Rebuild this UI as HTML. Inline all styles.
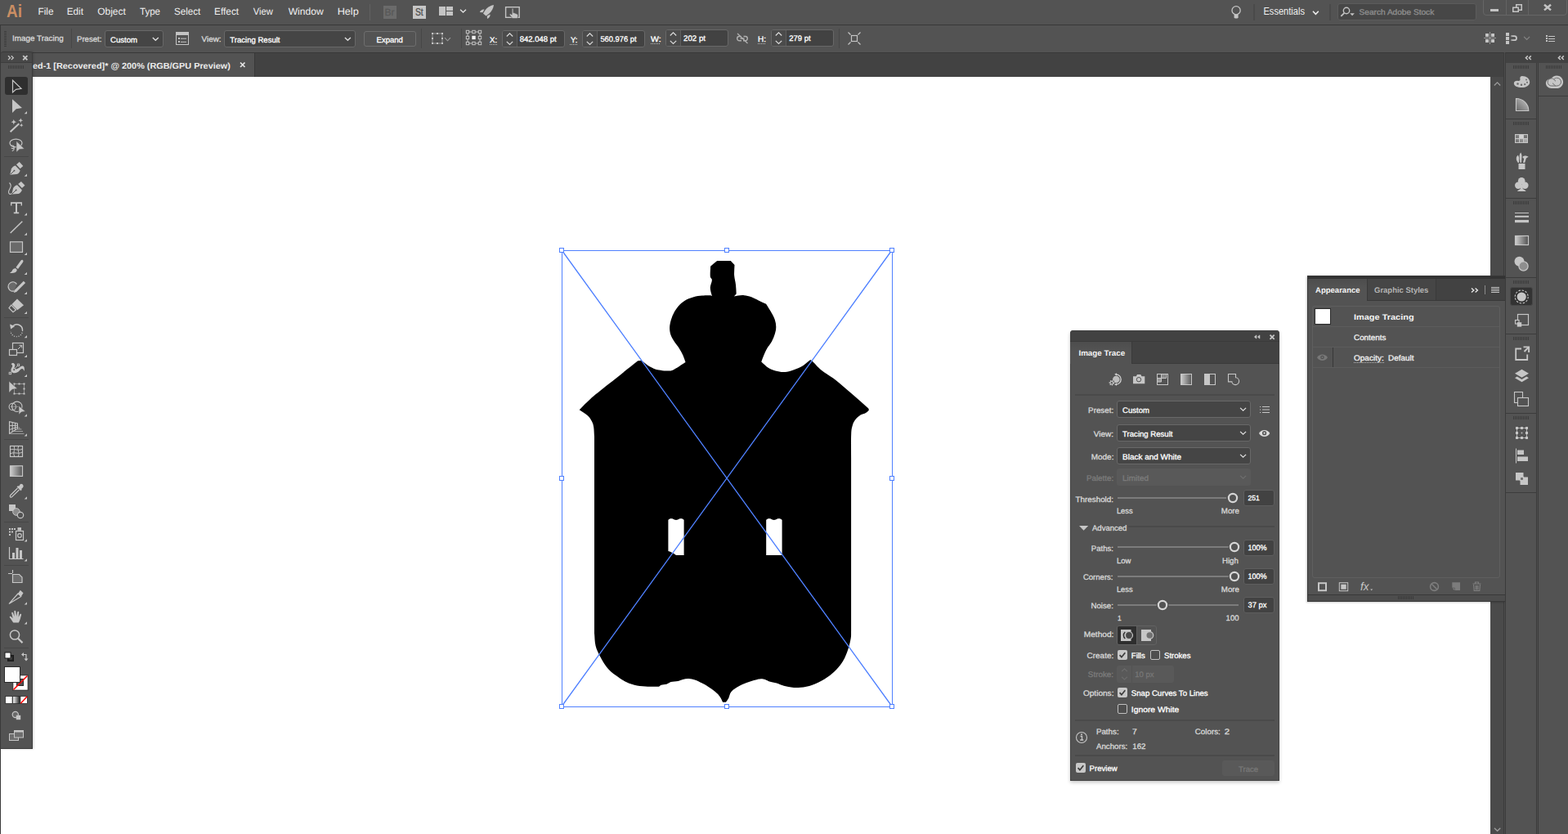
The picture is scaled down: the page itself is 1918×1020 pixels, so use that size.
<!DOCTYPE html>
<html lang="en">
<head>
<meta charset="utf-8">
<title>Adobe Illustrator - Image Trace</title>
<style>
*{box-sizing:border-box;margin:0;padding:0}
html,body{width:1918px;height:1020px;overflow:hidden;background:#fff}
body{font-family:"Liberation Sans",sans-serif;font-size:10px;color:#d6d6d6;position:relative}
.a{position:absolute}
.t{position:absolute;white-space:nowrap}
svg{position:absolute;overflow:visible}
.fld{position:absolute;background:#454545;border:1px solid #686868;border-radius:3px}
.sep{position:absolute;width:1px;background:#474747}
.u{position:absolute;height:1px;background-image:linear-gradient(90deg,#bbb 50%,transparent 50%);background-size:2px 1px}
</style>
</head>
<body>

<!-- frame -->

<div class="a" style="left:0;top:0;width:1918px;height:30px;background:#535353"></div>
<div class="a" style="left:0;top:30px;width:1918px;height:1px;background:#383838"></div>
<div class="a" style="left:0;top:31px;width:1918px;height:33px;background:#535353;border-left:1px solid #3a3a3a"></div>
<div class="a" style="left:0;top:64px;width:1918px;height:30px;background:#424242;border-top:1px solid #383838"></div>
<div class="a" style="left:40px;top:65px;width:272px;height:29px;background:#535353;border-right:1px solid #383838"></div>
<div class="a" style="left:40px;top:94px;width:1783px;height:926px;background:#fff"></div>

<!-- menubar -->
<div class="t" style="left:8px;top:-2px;color:#ca8e63;font-size:22.4px;line-height:31px;height:31px;font-weight:700;transform:translate(0.05px,0.1px) scaleX(0.85) skewX(.03deg);transform-origin:0 0;">Ai</div>
<div class="t" style="left:46px;top:6px;color:#f0f0f0;font-size:12px;line-height:17px;height:17px;transform:translate(0.41px,0px) scaleX(0.989) skewX(.03deg);transform-origin:0 0;">File</div>
<div class="t" style="left:81px;top:6px;color:#f0f0f0;font-size:12px;line-height:17px;height:17px;transform:translate(0.73px,0px) scaleX(0.975) skewX(.03deg);transform-origin:0 0;">Edit</div>
<div class="t" style="left:119px;top:6px;color:#f0f0f0;font-size:12px;line-height:17px;height:17px;transform:translate(0.2px,0px) scaleX(0.997) skewX(.03deg);transform-origin:0 0;">Object</div>
<div class="t" style="left:171px;top:6px;color:#f0f0f0;font-size:12px;line-height:17px;height:17px;transform:translate(0px,0px) scaleX(0.962) skewX(.03deg);transform-origin:0 0;">Type</div>
<div class="t" style="left:213px;top:6px;color:#f0f0f0;font-size:12px;line-height:17px;height:17px;transform:translate(0.03px,0px) scaleX(0.969) skewX(.03deg);transform-origin:0 0;">Select</div>
<div class="t" style="left:262px;top:6px;color:#f0f0f0;font-size:12px;line-height:17px;height:17px;transform:translate(0.01px,0px) scaleX(0.99) skewX(.03deg);transform-origin:0 0;">Effect</div>
<div class="t" style="left:309px;top:6px;color:#f0f0f0;font-size:12px;line-height:17px;height:17px;transform:translate(0.7px,0px) scaleX(0.935) skewX(.03deg);transform-origin:0 0;">View</div>
<div class="t" style="left:352px;top:6px;color:#f0f0f0;font-size:12px;line-height:17px;height:17px;transform:translate(0.7px,0px) scaleX(1.007) skewX(.03deg);transform-origin:0 0;">Window</div>
<div class="t" style="left:412px;top:6px;color:#f0f0f0;font-size:12px;line-height:17px;height:17px;transform:translate(0.64px,0px) scaleX(1.057) skewX(.03deg);transform-origin:0 0;">Help</div>
<div class="sep" style="left:452px;top:5px;height:20px;background:#616161"></div>
<div class="a" style="left:469px;top:7px;width:16px;height:16px;background:#6b6b6b"></div>
<div class="t" style="left:470px;top:7px;color:#585858;font-size:12px;line-height:17px;height:17px;transform:translate(0.6px,0.2px) scaleX(1) skewX(.03deg);transform-origin:0 0;-webkit-text-stroke:0.25px #585858;">Br</div>
<div class="a" style="left:505px;top:7px;width:16px;height:16px;background:#c6c6c6"></div>
<div class="t" style="left:508px;top:7px;color:#4c4c4c;font-size:12px;line-height:17px;height:17px;transform:translate(0px,0.2px) scaleX(0.858) skewX(.03deg);transform-origin:0 0;-webkit-text-stroke:0.25px #4c4c4c;">St</div>
<svg style="left:0;top:0" width="700" height="30" viewBox="0 0 700 30">
<g fill="#c4c4c4">
<rect x="537" y="8" width="8" height="11"/><rect x="546" y="8" width="8" height="5"/><rect x="546" y="14" width="8" height="5"/>
</g>
<path d="M563 11.7L566.5 15L570 11.7" fill="none" stroke="#e0e0e0" stroke-width="1.3"/>
<g fill="#c4c4c4">
<path d="M604 6C600 6.5 596 9 593.5 12.5L591 16.5L594.5 19.5L598.5 16.5C601.5 13.5 603.5 10 604 6Z"/>
<path d="M592.5 11.5C590 11 588 12.5 586.8 15L590.5 15.2Z"/>
<path d="M599.5 17.5C600 20 598.5 22 596 23L595.8 19.5Z"/>
</g>
<rect x="618.6" y="8.7" width="16.6" height="12.6" fill="none" stroke="#c4c4c4" stroke-width="1.4"/>
<path d="M626.2 10.5c.9-.6 1.700 0 1.700 .9v4.200l1.300 .2 3.500 1.400c.8 .4 1.100 1.300 .9 2.200l-.6 3.200h-6.200l-3.300-4.300c-.5-.8 .2-1.800 1.200-1.300l1.500 .9Z" fill="#c4c4c4" stroke="#535353" stroke-width=".6"/>
</svg>
<div class="a" style="left:1636px;top:4px;width:170px;height:21px;background:#474747;border:1px solid #5c5c5c;border-radius:3px"></div>
<svg style="left:1500px;top:0" width="418" height="30" viewBox="1500 0 418 30">
<circle cx="1512.100" cy="12.700" r="5.100" fill="none" stroke="#c4c4c4" stroke-width="1.300"/>
<path d="M1509.600 18h5v3.200l-1 1.300h-3l-1-1.300Z" fill="#c4c4c4"/>
<path d="M1606 13.800L1609.400 17.400L1612.800 13.800" fill="none" stroke="#ececec" stroke-width="1.600"/>
<circle cx="1647" cy="13" r="3.700" fill="none" stroke="#c4c4c4" stroke-width="1.400"/>
<path d="M1644.400 15.800L1640.300 19.800" stroke="#c4c4c4" stroke-width="1.800" fill="none"/>
<path d="M1651.300 16.300h5.600l-2.800 3Z" fill="#c4c4c4"/>
<rect x="1823" y="11" width="10" height="3" fill="#c4c4c4"/>
<rect x="1854.750" y="5.750" width="6.500" height="6.500" fill="none" stroke="#c4c4c4" stroke-width="1.500"/>
<rect x="1850.750" y="9.250" width="6.500" height="5" fill="#535353" stroke="#c4c4c4" stroke-width="1.500"/>
<path d="M1889 5.800L1897 12.400M1897 5.800L1889 12.400" stroke="#c4c4c4" stroke-width="2.500" fill="none"/>
</svg>
<div class="sep" style="left:1533px;top:5px;height:20px;width:2px;background:#4a4a4a"></div>
<div class="t" style="left:1545px;top:5px;color:#f0f0f0;font-size:12px;line-height:17px;height:17px;transform:translate(0.48px,0.6px) scaleX(0.922) skewX(.03deg);transform-origin:0 0;">Essentials</div>
<div class="sep" style="left:1626px;top:5px;height:20px;width:2px;background:#4a4a4a"></div>
<div class="t" style="left:1662px;top:7px;color:#8f8f8f;font-size:9.5px;line-height:13px;height:13px;transform:translate(0.6px,0.6px) scaleX(1.064) skewX(.03deg);transform-origin:0 0;-webkit-text-stroke:0.3px #8f8f8f;">Search Adobe Stock</div>
<div class="a" style="left:1814px;top:-3px;width:103px;height:22px;border:1px solid #666;border-radius:4px"></div>
<div class="sep" style="left:1842px;top:0;height:18px;background:#636363"></div>
<div class="sep" style="left:1869px;top:0;height:18px;background:#636363"></div>
<!-- ctrlbar -->
<div class="a" style="left:5px;top:38px;width:3px;height:19px;background-image:linear-gradient(180deg,#3c3c3c 50%,transparent 50%);background-size:3px 2px"></div>
<div class="t" style="left:15px;top:40px;color:#d8d8d8;font-size:9.6px;line-height:13px;height:13px;transform:translate(0px,0.1px) scaleX(1.033) skewX(.03deg);transform-origin:0 0;-webkit-text-stroke:0.3px #d8d8d8;">Image Tracing</div>
<div class="sep" style="left:87px;top:35px;height:24px"></div>
<div class="t" style="left:94px;top:40px;color:#d8d8d8;font-size:9.6px;line-height:13px;height:13px;transform:translate(0px,0.6px) scaleX(1) skewX(.03deg);transform-origin:0 0;-webkit-text-stroke:0.3px #d8d8d8;">Preset:</div>
<div class="fld" style="left:128px;top:37px;width:72px;height:21px"></div>
<div class="t" style="left:135px;top:41px;color:#ffffff;font-size:9.6px;line-height:13px;height:13px;transform:translate(0px,0.6px) scaleX(1) skewX(.03deg);transform-origin:0 0;-webkit-text-stroke:0.3px #ffffff;">Custom</div>
<div class="t" style="left:246px;top:40px;color:#d8d8d8;font-size:9.6px;line-height:13px;height:13px;transform:translate(0.5px,0.6px) scaleX(1.035) skewX(.03deg);transform-origin:0 0;-webkit-text-stroke:0.3px #d8d8d8;">View:</div>
<div class="fld" style="left:274px;top:37px;width:161px;height:21px"></div>
<div class="t" style="left:281px;top:41px;color:#ffffff;font-size:9.6px;line-height:13px;height:13px;transform:translate(0.3px,0.6px) scaleX(0.995) skewX(.03deg);transform-origin:0 0;-webkit-text-stroke:0.3px #ffffff;">Tracing Result</div>
<div class="a" style="left:445px;top:38px;width:64px;height:19px;border:1px solid #6e6e6e;border-radius:3px"></div>
<div class="t" style="left:460px;top:41px;color:#ffffff;font-size:9.6px;line-height:13px;height:13px;transform:translate(0.6px,0.6px) scaleX(0.991) skewX(.03deg);transform-origin:0 0;-webkit-text-stroke:0.3px #ffffff;">Expand</div>
<div class="sep" style="left:515px;top:35px;height:24px"></div>
<div class="sep" style="left:564px;top:35px;height:24px"></div>
<div class="fld" style="left:614px;top:37px;width:77px;height:21px;background:#424242"></div><div class="a" style="left:615px;top:38px;width:18px;height:19px;background:#4b4b4b;border-right:1px solid #5e5e5e;border-radius:2px 0 0 2px"></div>
<div class="fld" style="left:712px;top:37px;width:77px;height:21px;background:#424242"></div><div class="a" style="left:713px;top:38px;width:18px;height:19px;background:#4b4b4b;border-right:1px solid #5e5e5e;border-radius:2px 0 0 2px"></div>
<div class="fld" style="left:814px;top:36px;width:77px;height:21px;background:#424242"></div><div class="a" style="left:815px;top:37px;width:18px;height:19px;background:#4b4b4b;border-right:1px solid #5e5e5e;border-radius:2px 0 0 2px"></div>
<div class="fld" style="left:943px;top:36px;width:77px;height:21px;background:#424242"></div><div class="a" style="left:944px;top:37px;width:18px;height:19px;background:#4b4b4b;border-right:1px solid #5e5e5e;border-radius:2px 0 0 2px"></div>
<div class="t" style="left:599px;top:41px;color:#ffffff;font-size:9.6px;line-height:13px;height:13px;transform:translate(0px,0.6px) scaleX(1) skewX(.03deg);transform-origin:0 0;-webkit-text-stroke:0.3px #ffffff;">X:</div>
<div class="u" style="left:599px;top:54px;width:10px"></div>
<div class="t" style="left:698px;top:41px;color:#ffffff;font-size:9.6px;line-height:13px;height:13px;transform:translate(0px,0.6px) scaleX(1) skewX(.03deg);transform-origin:0 0;-webkit-text-stroke:0.3px #ffffff;">Y:</div>
<div class="u" style="left:697px;top:54px;width:9px"></div>
<div class="t" style="left:796px;top:40px;color:#ffffff;font-size:9.6px;line-height:13px;height:13px;transform:translate(0px,0.8px) scaleX(1.091) skewX(.03deg);transform-origin:0 0;-webkit-text-stroke:0.3px #ffffff;">W:</div>
<div class="u" style="left:796px;top:53px;width:12px"></div>
<div class="t" style="left:927px;top:40px;color:#ffffff;font-size:9.6px;line-height:13px;height:13px;transform:translate(0px,0.8px) scaleX(1.044) skewX(.03deg);transform-origin:0 0;-webkit-text-stroke:0.3px #ffffff;">H:</div>
<div class="u" style="left:927px;top:53px;width:10px"></div>
<div class="t" style="left:635px;top:40px;color:#ffffff;font-size:9.6px;line-height:13px;height:13px;transform:translate(0.8px,0.8px) scaleX(0.987) skewX(.03deg);transform-origin:0 0;-webkit-text-stroke:0.3px #ffffff;">842.048 pt</div>
<div class="t" style="left:734px;top:40px;color:#ffffff;font-size:9.6px;line-height:13px;height:13px;transform:translate(0.4px,0.8px) scaleX(0.974) skewX(.03deg);transform-origin:0 0;-webkit-text-stroke:0.3px #ffffff;">560.976 pt</div>
<div class="t" style="left:836px;top:39px;color:#ffffff;font-size:9.6px;line-height:13px;height:13px;transform:translate(0.1px,0.9px) scaleX(1.007) skewX(.03deg);transform-origin:0 0;-webkit-text-stroke:0.3px #ffffff;">202 pt</div>
<div class="t" style="left:965px;top:39px;color:#ffffff;font-size:9.6px;line-height:13px;height:13px;transform:translate(0.3px,0.9px) scaleX(0.989) skewX(.03deg);transform-origin:0 0;-webkit-text-stroke:0.3px #ffffff;">279 pt</div>
<div class="sep" style="left:1026px;top:35px;height:24px"></div>
<svg style="left:0;top:0" width="1918" height="64" viewBox="0 0 1918 64"><path d="M186.8 45.95L190.3 49.25L193.8 45.95" fill="none" stroke="#e0e0e0" stroke-width="1.3"/><path d="M421.9 45.95L425.4 49.25L428.9 45.95" fill="none" stroke="#e0e0e0" stroke-width="1.3"/><path d="M619.8 44.5L623.5 40.900000000000006L627.2 44.5" fill="none" stroke="#dcdcdc" stroke-width="1.2"/><path d="M619.8 50.900000000000006L623.5 54.5L627.2 50.900000000000006" fill="none" stroke="#dcdcdc" stroke-width="1.2"/><path d="M717.8 44.5L721.5 40.900000000000006L725.2 44.5" fill="none" stroke="#dcdcdc" stroke-width="1.2"/><path d="M717.8 50.900000000000006L721.5 54.5L725.2 50.900000000000006" fill="none" stroke="#dcdcdc" stroke-width="1.2"/><path d="M819.8 43.5L823.5 39.900000000000006L827.2 43.5" fill="none" stroke="#dcdcdc" stroke-width="1.2"/><path d="M819.8 49.900000000000006L823.5 53.5L827.2 49.900000000000006" fill="none" stroke="#dcdcdc" stroke-width="1.2"/><path d="M948.8 43.5L952.5 39.900000000000006L956.2 43.5" fill="none" stroke="#dcdcdc" stroke-width="1.2"/><path d="M948.8 49.900000000000006L952.5 53.5L956.2 49.900000000000006" fill="none" stroke="#dcdcdc" stroke-width="1.2"/><rect x="215.500" y="39.500" width="15" height="15" fill="none" stroke="#c4c4c4" stroke-width="1"/><rect x="215" y="39" width="16" height="4" fill="#c4c4c4"/><rect x="218" y="46" width="2" height="2" fill="#c4c4c4"/><rect x="221" y="46.700" width="7" height="1" fill="#c4c4c4"/><rect x="218" y="50" width="2" height="2" fill="#c4c4c4"/><rect x="221" y="50.800" width="7" height="1" fill="#c4c4c4"/><rect x="529" y="41" width="12" height="12" fill="none" stroke="#a8a8a8" stroke-width=".8"/><rect x="528" y="40" width="2" height="2" fill="#c4c4c4"/><rect x="534" y="40" width="2" height="2" fill="#c4c4c4"/><rect x="540" y="40" width="2" height="2" fill="#c4c4c4"/><rect x="528" y="46" width="2" height="2" fill="#c4c4c4"/><rect x="540" y="46" width="2" height="2" fill="#c4c4c4"/><rect x="528" y="52" width="2" height="2" fill="#c4c4c4"/><rect x="534" y="52" width="2" height="2" fill="#c4c4c4"/><rect x="540" y="52" width="2" height="2" fill="#c4c4c4"/><path d="M544.0 46.2L547.5 49.8L551.0 46.2" fill="none" stroke="#9a9a9a" stroke-width="1.1"/><rect x="570.3" y="37.3" width="3.400" height="3.400" fill="none" stroke="#c4c4c4" stroke-width="1"/><rect x="577.8" y="37.3" width="3.400" height="3.400" fill="none" stroke="#c4c4c4" stroke-width="1"/><rect x="585.3" y="37.3" width="3.400" height="3.400" fill="none" stroke="#c4c4c4" stroke-width="1"/><rect x="570.3" y="44.3" width="3.400" height="3.400" fill="none" stroke="#c4c4c4" stroke-width="1"/><rect x="577.3" y="43.8" width="4.400" height="4.400" fill="#f2f2f2"/><rect x="585.3" y="44.3" width="3.400" height="3.400" fill="none" stroke="#c4c4c4" stroke-width="1"/><rect x="570.3" y="51.3" width="3.400" height="3.400" fill="none" stroke="#c4c4c4" stroke-width="1"/><rect x="577.8" y="51.3" width="3.400" height="3.400" fill="none" stroke="#c4c4c4" stroke-width="1"/><rect x="585.3" y="51.3" width="3.400" height="3.400" fill="none" stroke="#c4c4c4" stroke-width="1"/><path d="M574 39h3.500M581.500 39h3.500M574 53h3.500M581.500 53h3.500M572 41v3M572 48v3M587 41v3M587 48v3" stroke="#c4c4c4" stroke-width="1" fill="none"/><g fill="none" stroke="#b0b0b0" stroke-width="1.500"><path d="M906.500 44.500h-2.200a2.600 2.600 0 0 0 0 5.200h2.700"/><path d="M909.500 44.500h2.200a2.600 2.600 0 0 1 0 5.200h-2.700"/><path d="M905.500 47.100h5"/><path d="M902 41L914.500 53" stroke-width="1.300"/></g><rect x="1041.500" y="43.500" width="7" height="7" fill="none" stroke="#c4c4c4" stroke-width="1.200"/><path d="M1037.500 39.500l3 3M1052.500 39.500l-3 3M1037.500 54.500l3-3M1052.500 54.500l-3-3" stroke="#c4c4c4" stroke-width="1.200" fill="none"/><path d="M1038.500 43v-2.500h2.500M1051.500 43v-2.500h-2.500M1038.500 51v2.500h2.500M1051.500 51v2.500h-2.500" stroke="#c4c4c4" stroke-width="1" fill="none" opacity="0"/><path d="M1039 43.500l1.800-1.800 1.800 1.800ZM1051 43.500l-1.800-1.800-1.800 1.800Z" fill="#c4c4c4" opacity="0"/><g fill="#c4c4c4"><rect x="1817" y="41" width="4" height="4"/><rect x="1824" y="41" width="4" height="4"/><rect x="1817" y="48" width="4" height="4"/><rect x="1824" y="48" width="4" height="4"/></g><rect x="1822" y="39" width="1" height="15" fill="#9a9a9a"/><rect x="1815" y="46" width="15" height="1" fill="#9a9a9a"/><g fill="#c4c4c4"><rect x="1842" y="40" width="4" height="4"/><rect x="1842" y="45" width="4" height="4"/><rect x="1842" y="50" width="4" height="4"/></g><path d="M1848.500 44.200h4a2.500 2.500 0 0 1 0 5h-4" fill="none" stroke="#c4c4c4" stroke-width="1.800"/><rect x="1848" y="43.300" width="1.500" height="1.800" fill="#8a8a8a"/><rect x="1848" y="48.300" width="1.500" height="1.800" fill="#8a8a8a"/><path d="M1864.1 44.800000000000004L1867.6 48.4L1871.1 44.800000000000004" fill="none" stroke="#858585" stroke-width="1.2"/><g fill="#c4c4c4"><rect x="1891" y="43" width="2" height="2"/><rect x="1894" y="44" width="8" height="1"/><rect x="1891" y="46" width="2" height="2"/><rect x="1894" y="47" width="8" height="1"/><rect x="1891" y="49" width="2" height="2"/><rect x="1894" y="50" width="8" height="1"/></g></svg>
<!-- tools -->
<div class="t" style="left:40px;top:73px;color:#ececec;font-size:10.3px;line-height:14px;height:14px;font-weight:700;transform:translate(0px,0.6px) scaleX(1.055) skewX(.03deg);transform-origin:0 0;">ed-1 [Recovered]* @ 200% (RGB/GPU Preview)</div>
<svg style="left:290px;top:72px" width="14" height="14" viewBox="290 72 14 14"><path d="M294 76.500L299.500 82M299.500 76.500L294 82" stroke="#e6e6e6" stroke-width="1.700" fill="none"/></svg>
<div class="a" style="left:1px;top:63px;width:39px;height:853px;background:#535353;border-right:1px solid #3b3b3b;border-bottom:1px solid #3b3b3b;border-radius:3px 3px 0 0;box-shadow:1px 0 3px rgba(0,0,0,.18)"></div>
<div class="a" style="left:1px;top:63px;width:38px;height:14px;background:#484848;border-top:1px solid #3b3b3b;border-bottom:1px solid #3e3e3e;border-radius:3px 3px 0 0"></div>
<div class="a" style="left:0;top:64px;width:1px;height:956px;background:#3a3a3a"></div>
<div class="a" style="left:10px;top:80px;width:19px;height:4px;background-image:linear-gradient(90deg,#3c3c3c 50%,transparent 50%);background-size:2px 4px"></div>
<div class="a" style="left:6px;top:94px;width:28px;height:22px;background:#2f2f2f;border-radius:3px"></div>
<div class="a" style="left:5px;top:191px;width:30px;height:1px;background:#474747"></div>
<div class="a" style="left:5px;top:388px;width:30px;height:1px;background:#474747"></div>
<div class="a" style="left:5px;top:537px;width:30px;height:1px;background:#474747"></div>
<div class="a" style="left:5px;top:638px;width:30px;height:1px;background:#474747"></div>
<div class="a" style="left:5px;top:691px;width:30px;height:1px;background:#474747"></div>
<div class="a" style="left:5px;top:792px;width:30px;height:1px;background:#474747"></div>
<svg style="left:0;top:0" width="60" height="1020" viewBox="0 0 60 1020"><path d="M10 68.300l2.500 2.400-2.500 2.400M13.800 68.300l2.500 2.400-2.500 2.400" fill="none" stroke="#c6c6c6" stroke-width="1.300"/><path d="M28.200 68.200l5.200 5.200M33.400 68.200l-5.200 5.200" fill="none" stroke="#c6c6c6" stroke-width="1.800"/><path d="M15.500 98.200V113L19.600 109.300 26 108.300Z" fill="none" stroke="#c6c6c6" stroke-width="1.200" stroke-linejoin="miter"/><path d="M15 121.300V138L19.800 133.200 27 132Z" fill="#c6c6c6"/><path d="M29.700 139.2h3.300v-3.300Z" fill="#c6c6c6"/><path d="M12.600 161.300L23.300 151.200" stroke="#c6c6c6" stroke-width="2" fill="none"/><path d="M16.8 145.89999999999998L17.724 148.27599999999998L20.1 149.2L17.724 150.124L16.8 152.5L15.876000000000001 150.124L13.5 149.2L15.876000000000001 148.27599999999998Z" fill="#c6c6c6"/><path d="M25.3 144.4L26.112000000000002 146.488L28.2 147.3L26.112000000000002 148.11200000000002L25.3 150.20000000000002L24.488 148.11200000000002L22.400000000000002 147.3L24.488 146.488Z" fill="#c6c6c6"/><path d="M26.2 150.79999999999998L26.872 152.528L28.599999999999998 153.2L26.872 153.87199999999999L26.2 155.6L25.528 153.87199999999999L23.8 153.2L25.528 152.528Z" fill="#c6c6c6"/><ellipse cx="19.500" cy="175" rx="7.500" ry="4.800" fill="none" stroke="#c6c6c6" stroke-width="1.200"/><path d="M13.500 178.500c1.800-1.200 4 0 3.600 1.800-.4 1.600-2.500 1.800-3.200 .5M17 180.500c.6 2-.3 3.500-2.200 4.300" fill="none" stroke="#c6c6c6" stroke-width="1.100"/><path d="M20 172.500V186.200L23.700 182.700 29.800 182Z" fill="#c6c6c6" stroke="#535353" stroke-width=".6"/><g transform="translate(0 0.8)"><path d="M12.100 213L14 205.500C15 203.500 17 202 18.800 201.600L24.600 207.600C24.300 209.500 22.500 211.500 20.500 212.300Z" fill="#c6c6c6"/><path d="M20 200.500L23.700 197.300 28.300 202.200 24.700 205.500Z" fill="#c6c6c6"/><path d="M12.500 212.600L17.200 208.200" stroke="#535353" stroke-width="1"/><circle cx="17.500" cy="207.900" r=".9" fill="#535353"/></g><path d="M29.700 215.8h3.300v-3.300Z" fill="#c6c6c6"/><g transform="translate(2.2 24.6)"><path d="M12.100 213L14 205.500C15 203.500 17 202 18.800 201.600L24.600 207.600C24.300 209.500 22.500 211.500 20.500 212.300Z" fill="#c6c6c6"/><path d="M20 200.500L23.700 197.300 28.300 202.200 24.700 205.500Z" fill="#c6c6c6"/><path d="M12.500 212.600L17.200 208.200" stroke="#535353" stroke-width="1"/><circle cx="17.500" cy="207.900" r=".9" fill="#535353"/></g><path d="M11.500 223.500c2.500 2.500 2.200 4.500 .7 7-1.400 2.300-2.500 5-.8 6.500 1 .8 2.200 .4 2.800-.3" fill="none" stroke="#c6c6c6" stroke-width="1.100"/><path d="M13 247.200h14v4.200h-1.400v-2.300h-4.600v10.500h2.200v1.600h-6.400v-1.600h2.200v-10.500h-4.600v2.300H13Z" fill="#c6c6c6"/><path d="M29.700 263.5h3.300v-3.300Z" fill="#c6c6c6"/><path d="M12.700 285L27.300 270.800" stroke="#c6c6c6" stroke-width="1.500" fill="none"/><path d="M29.700 287.7h3.300v-3.300Z" fill="#c6c6c6"/><rect x="12.500" y="295.800" width="15" height="12.600" fill="#6a6a6a" stroke="#c6c6c6" stroke-width="1.200"/><path d="M29.700 312h3.300v-3.300Z" fill="#c6c6c6"/><path d="M27.800 318c1 .8 .8 1.800 .2 2.800l-6 8.200-2.600-1.900 6-8.300c.7-1 1.600-1.300 2.400-.8Z" fill="#c6c6c6"/><path d="M18.600 328.200c1.500 .2 2.400 1.400 2 2.900-.6 2.300-4.500 3.300-8.700 2.700 2-1 2.700-1.800 3.200-3.300 .5-1.500 1.900-2.500 3.500-2.300Z" fill="#c6c6c6"/><path d="M29.700 336h3.300v-3.300Z" fill="#c6c6c6"/><path d="M20.500 347.500a5.600 5.600 0 1 0-3 8.300" fill="#6a6a6a" stroke="#c6c6c6" stroke-width="1.300"/><path d="M28.800 343.800l2.300 2.300-11 11-3.300 1 1-3.300Z" fill="#c6c6c6"/><path d="M29.700 360h3.300v-3.300Z" fill="#c6c6c6"/><path d="M21 365.500l8 7.800-7.700 6-7-7Z" fill="#c6c6c6"/><path d="M13.700 373.200l5.800 5.800-3.500 2.700-5-5Z" fill="none" stroke="#c6c6c6" stroke-width="1.200"/><path d="M29.700 384h3.300v-3.300Z" fill="#c6c6c6"/><path d="M16 398.500a7 7 0 0 1 11.500 5.500" fill="none" stroke="#c6c6c6" stroke-width="1.500"/><path d="M12 396.500l1.200 6 5-3.500Z" fill="#c6c6c6"/><path d="M27.500 404a7 7 0 0 1-14.500 1" fill="none" stroke="#c6c6c6" stroke-width="1.200" stroke-dasharray="1.200 1.600"/><path d="M29.700 413.2h3.300v-3.300Z" fill="#c6c6c6"/><rect x="15.500" y="419.500" width="13" height="12" fill="none" stroke="#c6c6c6" stroke-width="1.200"/><rect x="11.500" y="427.500" width="9" height="7" fill="#535353" stroke="#c6c6c6" stroke-width="1.200"/><path d="M22 427l4.500-4.500M23.500 422.300h3.200v3.200" fill="none" stroke="#c6c6c6" stroke-width="1"/><path d="M29.700 437h3.300v-3.300Z" fill="#c6c6c6"/><path d="M13.600 445.600c.6-1.300 2.200-1.900 3.500-1.200 1.700 1 1.400 2.900 .7 4.500-.4 1-.5 1.700 .2 2.200 1.300 .9 3.600 .3 5.700-1.500 1.700-1.500 3.200-2.600 4.700-1.900 1.400 .6 1.800 2.300 1.300 6.400-.8-2.200-1.700-3.200-2.800-3.100-1.200 .1-2 1.200-3.300 2.600-2.200 2.300-5.200 3.200-7.700 2.300-2-.8-2.900-2.600-2.300-4.700 .4-1.500 1.700-2.500 1.600-3.800-.1-.9-.7-1.500-1.600-1.800Z" fill="#c6c6c6"/><path d="M12.600 456.200L22.200 446.600" stroke="#c6c6c6" stroke-width=".9" fill="none"/><circle cx="17.200" cy="452.100" r="1.500" fill="#535353" stroke="#c6c6c6" stroke-width="1"/><rect x="11.200" y="455.300" width="2.400" height="2.400" fill="#535353" stroke="#c6c6c6" stroke-width=".9"/><rect x="21.300" y="445.200" width="2.400" height="2.400" fill="#535353" stroke="#c6c6c6" stroke-width=".9"/><path d="M29.700 461h3.300v-3.300Z" fill="#c6c6c6"/><rect x="17.500" y="469.500" width="12" height="12" fill="none" stroke="#a0a0a0" stroke-width=".8"/><rect x="16.5" y="468.5" width="2" height="2" fill="#c6c6c6"/><rect x="22.5" y="468.5" width="2" height="2" fill="#c6c6c6"/><rect x="28.5" y="468.5" width="2" height="2" fill="#c6c6c6"/><rect x="28.5" y="474.5" width="2" height="2" fill="#c6c6c6"/><rect x="28.5" y="480.5" width="2" height="2" fill="#c6c6c6"/><rect x="22.5" y="480.5" width="2" height="2" fill="#c6c6c6"/><rect x="16.5" y="480.5" width="2" height="2" fill="#c6c6c6"/><path d="M11 466.300V480.300L15 476.200 21.200 475.300Z" fill="#c6c6c6" stroke="#535353" stroke-width=".5"/><circle cx="20.800" cy="497.300" r="6.200" fill="none" stroke="#c6c6c6" stroke-width="1.100"/><circle cx="15.300" cy="497.500" r="4.200" fill="none" stroke="#c6c6c6" stroke-width="1.100"/><path d="M13.300 497.400h9" stroke="#c6c6c6" stroke-width="1" stroke-dasharray="1 1" fill="none"/><path d="M23 496.200V507.200L26.200 504 31.200 503.300Z" fill="#c6c6c6" stroke="#535353" stroke-width=".7"/><path d="M29.700 509.5h3.300v-3.300Z" fill="#c6c6c6"/><path d="M11.500 515.700V530.300L21.400 524.300V518Z" fill="none" stroke="#c6c6c6" stroke-width="1.100"/><path d="M15.200 516.800V528M18.500 517.500V526M11.500 520.700L21.400 520.200M11.500 525.500L21.400 522.300" fill="none" stroke="#c6c6c6" stroke-width="1"/><path d="M21 525h5.500M17 527.500h11M12 530.400h17.400" fill="none" stroke="#a0a0a0" stroke-width="1"/><path d="M22.500 521.500l3 3h-3Z" fill="#8a8a8a"/><path d="M29.700 533.5h3.300v-3.300Z" fill="#c6c6c6"/><rect x="12.500" y="545.500" width="15" height="13" fill="none" stroke="#c6c6c6" stroke-width="1.200"/><path d="M12.500 550c5-2 10 2 15-1M12.500 555c5-3 9 1 15-2M17 545.500c2 4-2 9 1 13M23 545.500c-3 4 2 9-1 13" fill="none" stroke="#c6c6c6" stroke-width="1"/><defs><linearGradient id="g1" x1="0" x2="1"><stop offset="0" stop-color="#cfcfcf"/><stop offset="1" stop-color="#555"/></linearGradient></defs><rect x="12.500" y="569.800" width="15" height="12.600" fill="url(#g1)" stroke="#c6c6c6" stroke-width="1.200"/><path d="M25.800 591.800c1.600 0 2.800 1.300 2.800 2.800 0 1-.5 1.700-1.200 2.300l-1.300 1 .8 .9-1.500 1.500-4.800-4.800 1.500-1.500 .9 .8 1-1.300c.5-.8 1-1.700 1.800-1.700Z" fill="#c6c6c6"/><path d="M21.500 597l-8.500 8.500c-.8 .8-1 1.600-.4 2.300 .7 .6 1.500 .4 2.300-.4l8.600-8.400" fill="none" stroke="#c6c6c6" stroke-width="1.200"/><path d="M29.700 610.5h3.300v-3.300Z" fill="#c6c6c6"/><rect x="11" y="617" width="8" height="8" fill="#c6c6c6"/><circle cx="20" cy="626" r="4.300" fill="#8c8c8c" stroke="#c6c6c6" stroke-width="1"/><circle cx="25" cy="630" r="3.700" fill="#535353" stroke="#c6c6c6" stroke-width="1.200"/><rect x="19.500" y="649.500" width="9" height="11" fill="none" stroke="#c6c6c6" stroke-width="1.200"/><rect x="21.500" y="645.200" width="4.500" height="3.500" fill="#c6c6c6"/><circle cx="24" cy="655" r="2.300" fill="none" stroke="#c6c6c6" stroke-width="1.200"/><rect x="11" y="646" width="2" height="2" fill="#c6c6c6"/><rect x="14" y="646" width="2" height="2" fill="#c6c6c6"/><rect x="17" y="646" width="2" height="2" fill="#c6c6c6"/><rect x="11" y="649.5" width="2" height="2" fill="#c6c6c6"/><rect x="14" y="649.5" width="2" height="2" fill="#c6c6c6"/><rect x="11" y="653" width="2" height="2" fill="#c6c6c6"/><path d="M29.700 662.5h3.300v-3.300Z" fill="#c6c6c6"/><path d="M11.500 669v14.500h17" fill="none" stroke="#c6c6c6" stroke-width="1.200"/><rect x="15" y="676" width="3" height="7" fill="#c6c6c6"/><rect x="19.500" y="670" width="3" height="13" fill="#c6c6c6"/><rect x="24" y="673" width="3" height="10" fill="#c6c6c6"/><path d="M29.700 686.5h3.300v-3.300Z" fill="#c6c6c6"/><path d="M15.500 702.500h8l3.500 3.500v6.500h-11.500Z" fill="#6e6e6e" stroke="#c6c6c6" stroke-width="1.200"/><path d="M10 701.500h5M15.500 697v4" fill="none" stroke="#c6c6c6" stroke-width="1.100"/><path d="M24.800 721.800l3.700 3.400-2.600 4.300-3.900-3.600Z" fill="#c6c6c6"/><path d="M22 726l3.800 3.400-14.500 8.800Z" fill="none" stroke="#c6c6c6" stroke-width="1.200" stroke-linejoin="round"/><path d="M29.700 739.5h3.300v-3.300Z" fill="#c6c6c6"/><path d="M16.300 761.500c-1.800-2.500-3-4.500-4.500-6.500-.5-.8 .6-1.900 1.600-1l2.300 2.300-1.500-6.300c-.3-1.200 1.400-1.700 1.800-.5l1.600 4.500-.3-6.200c0-1.200 1.800-1.300 2-.1l.8 6 1.200-5.300c.3-1.200 2-.9 1.900 .3l-.6 6 1.800-3.500c.6-1 2-.4 1.700 .7-1 3.500-1.500 6.500-3.300 9.600Z" fill="#c6c6c6"/><path d="M29.700 763.5h3.300v-3.300Z" fill="#c6c6c6"/><circle cx="18" cy="776.500" r="5.600" fill="none" stroke="#c6c6c6" stroke-width="1.500"/><path d="M22 780.800l5.500 5.300" stroke="#c6c6c6" stroke-width="2.200" fill="none"/><rect x="9.500" y="801.500" width="7" height="7" fill="#222" stroke="#1a1a1a" stroke-width="1"/><rect x="11.500" y="803.500" width="3" height="3" fill="#535353"/><rect x="6" y="798" width="7" height="7" fill="#fff" stroke="#1a1a1a" stroke-width="1"/><path d="M27.500 800.500h4.500v6" fill="none" stroke="#c6c6c6" stroke-width="1.200"/><path d="M26 800.500l3-2.500v5ZM32 808.500l-2.500-3h5Z" fill="#c6c6c6"/><rect x="15.800" y="825.800" width="18.400" height="18.400" fill="#fff" stroke="#2a2a2a" stroke-width="1"/><rect x="20.500" y="830.500" width="8" height="8" fill="#535353" stroke="#2a2a2a" stroke-width="1"/><path d="M16.500 843.500L33.500 826.500" stroke="#ff0000" stroke-width="1.600"/><rect x="5.500" y="815.500" width="19" height="19" fill="#fff" stroke="#2a2a2a" stroke-width="1"/><defs><linearGradient id="g2" x1="0" x2="1"><stop offset="0" stop-color="#fff"/><stop offset="1" stop-color="#222"/></linearGradient></defs><rect x="6.500" y="851.500" width="8.600" height="9" fill="#fff" stroke="#2a2a2a" stroke-width=".8"/><rect x="15.700" y="851.500" width="8.600" height="9" fill="url(#g2)" stroke="#2a2a2a" stroke-width=".8"/><rect x="24.900" y="851.500" width="8.600" height="9" fill="#fff" stroke="#2a2a2a" stroke-width=".8"/><path d="M25.300 860.200L33.200 851.800" stroke="#ff0000" stroke-width="1.500"/><circle cx="18.800" cy="874" r="3.600" fill="#6a6a6a" stroke="#c6c6c6" stroke-width="1.200"/><rect x="19.800" y="874.800" width="5.400" height="5.400" fill="#c6c6c6"/><rect x="11.500" y="897.500" width="11" height="8" fill="#6e6e6e" stroke="#c6c6c6" stroke-width="1"/><rect x="17.500" y="893.500" width="11" height="8.500" fill="#6e6e6e" stroke="#c6c6c6" stroke-width="1"/><rect x="17.500" y="893.500" width="11" height="2" fill="#c6c6c6"/></svg>
<!-- art -->
<svg id="art" style="left:0;top:0" width="1918" height="1020" viewBox="0 0 1918 1020">
<path fill="#000" d="M877.2 319.1C882.7 319.1 888.3 319.1 893.8 319.1C895.4 320.7 896.9 322.4 898.5 324.0C898.4 328.2 897.9 332.5 898.1 336.5C898.4 340.5 899.6 344.4 900.0 348.2C900.4 352.0 900.5 355.6 900.7 359.3C899.7 360.4 898.8 361.5 897.8 362.6C899.5 362.2 900.8 361.7 902.9 361.5C905.0 361.3 907.6 360.9 910.3 361.2C913.0 361.5 916.2 362.2 919.1 363.2C922.0 364.2 924.9 366.0 927.9 367.4C930.9 368.8 934.0 370.3 937.1 371.8C939.2 375.2 941.6 378.9 943.4 382.1C945.2 385.3 946.8 388.0 947.8 390.9C948.8 393.8 949.3 396.8 949.3 399.7C949.3 402.6 948.7 405.6 947.8 408.5C946.9 411.4 945.7 414.4 944.1 417.4C942.5 420.3 939.9 423.3 938.2 426.2C936.5 429.1 935.2 432.3 934.1 435.0C933.0 437.7 932.2 439.9 931.3 442.4C934.1 444.8 936.8 447.9 939.7 449.7C942.6 451.5 945.4 452.5 948.5 453.4C951.6 454.3 954.9 454.9 958.1 454.9C961.3 454.9 964.0 454.5 967.6 453.4C971.2 452.3 976.3 450.6 980.0 448.5C983.7 446.4 986.7 443.4 990.0 440.9C991.1 441.0 990.7 439.3 993.2 441.3C995.7 443.3 1000.2 449.2 1005.1 453.1C1010.0 457.1 1015.9 460.0 1022.4 465.0C1028.9 470.0 1037.2 477.6 1043.9 483.3C1050.6 489.1 1056.2 494.1 1062.3 499.5C1062.5 500.2 1062.7 501.0 1062.9 501.7C1061.6 502.8 1060.7 503.9 1059.0 504.9C1057.3 505.9 1054.8 506.1 1052.6 507.5C1050.4 508.9 1047.7 511.4 1046.1 513.5C1044.5 515.6 1043.7 517.1 1042.9 520.0C1042.1 522.9 1041.5 524.3 1041.2 531.0C1040.9 537.7 1041.1 550.3 1041.1 560.0C1041.1 630.7 1041.1 701.3 1041.1 772.0C1041.0 774.9 1041.3 777.2 1040.7 780.8C1040.1 784.4 1039.1 789.0 1037.5 793.7C1035.9 798.4 1033.9 804.1 1031.0 808.8C1028.1 813.5 1024.5 817.8 1020.2 821.8C1015.9 825.8 1010.1 829.7 1005.1 832.6C1000.1 835.5 994.8 837.6 990.0 839.0C985.2 840.4 980.2 840.8 976.5 841.0C972.8 841.2 970.6 840.8 967.6 840.4C964.6 840.0 961.7 839.6 958.8 838.8C955.9 838.0 952.9 836.5 950.0 835.6C947.1 834.7 943.4 834.1 941.2 833.4C939.0 832.7 938.3 832.0 936.8 831.5C935.3 831.0 934.1 830.4 932.4 830.3C930.7 830.2 929.0 830.4 926.5 830.9C924.0 831.4 920.6 832.4 917.6 833.4C914.6 834.4 911.7 835.4 908.8 836.8C905.9 838.1 902.5 839.9 900.0 841.5C897.5 843.1 895.6 844.5 894.1 846.6C892.6 848.7 892.2 852.0 891.2 854.0C890.2 856.0 889.0 857.2 887.9 858.8C886.6 858.8 885.4 858.8 884.1 858.8C883.0 856.7 882.2 854.4 880.9 852.5C879.6 850.6 878.7 849.4 876.5 847.4C874.3 845.4 870.6 842.7 867.6 840.7C864.6 838.7 861.7 837.1 858.8 835.6C855.9 834.1 852.7 832.4 850.0 831.5C847.3 830.6 845.1 830.1 842.6 830.0C840.1 829.9 837.5 830.4 835.3 830.9C833.1 831.4 831.8 832.4 829.4 832.9C827.0 833.4 822.9 833.5 820.6 834.1C818.3 834.8 817.4 836.2 815.4 836.8C813.4 837.4 810.4 837.3 808.8 837.8C807.2 838.3 807.4 839.4 805.9 839.7C804.4 840.0 802.3 839.7 800.0 839.7C797.7 839.7 795.7 839.9 792.2 839.7C788.7 839.5 783.5 839.5 779.2 838.6C774.9 837.7 770.6 836.4 766.3 834.3C762.0 832.2 757.2 829.1 753.3 826.1C749.3 823.1 745.8 820.4 742.6 816.4C739.4 812.4 736.2 806.9 733.9 802.4C731.5 797.9 729.6 794.1 728.5 789.4C727.4 784.7 727.5 779.3 727.0 774.3C727.0 694.2 727.0 614.1 727.0 534.0C726.7 530.1 726.7 525.4 726.2 522.4C725.7 519.4 725.4 518.1 724.2 515.7C723.0 513.3 721.4 510.6 718.8 508.2C716.2 505.8 712.1 503.6 708.7 501.3C713.0 497.0 715.6 493.7 721.6 488.4C727.6 483.1 734.9 477.5 744.7 469.6C754.5 461.8 768.4 450.7 780.3 441.3C781.9 441.3 783.0 440.4 785.0 441.3C787.0 442.2 789.7 445.1 792.2 446.7C794.7 448.3 797.7 449.9 800.0 450.9C802.3 451.8 803.4 452.0 805.9 452.4C808.4 452.8 811.8 453.4 814.7 453.4C817.6 453.4 819.5 454.1 823.5 452.4C827.5 450.7 833.5 446.2 838.5 443.1C837.4 440.2 836.6 437.1 835.3 434.3C834.0 431.5 832.6 428.9 830.9 426.2C829.2 423.5 826.7 420.8 825.0 418.1C823.3 415.4 821.6 412.8 820.6 410.0C819.6 407.2 819.1 404.4 819.1 401.2C819.1 398.0 819.9 394.2 820.9 390.9C821.9 387.6 823.2 384.4 825.0 381.3C826.8 378.2 829.1 374.9 831.6 372.5C834.1 370.1 836.9 368.2 839.7 366.6C842.5 365.1 845.3 364.1 848.5 363.2C851.7 362.3 855.6 361.8 858.8 361.5C862.0 361.2 865.9 361.1 867.9 361.2C869.9 361.2 870.0 361.6 871.0 361.8C870.6 360.7 870.3 360.3 869.9 358.5C869.5 356.7 868.6 353.9 868.8 351.2C869.0 348.5 870.9 344.6 870.9 342.4C870.9 340.2 869.1 340.7 868.8 337.9C868.5 335.1 869.0 329.8 869.1 325.7C871.8 323.5 874.5 321.3 877.2 319.1Z"/>
<path fill="#fff" d="M817.4 636C818.5 634.2 821 634 823 634.6C825 636.4 829 636.4 831 634.6C833 634 835.6 634.2 836.6 636L836.6 679L827 679C824 676.5 820.5 675 817.4 674Z"/>
<path fill="#fff" d="M937.2 636C938.3 634.2 940.8 634 942.8 634.6C944.8 636.4 948.8 636.4 950.8 634.6C952.8 634 955.4 634.2 956.6 636L956.6 679L937.2 679Z"/>
<g fill="none" stroke="#4f80ff" stroke-width="1">
<rect x="687.5" y="306.5" width="404" height="558"/>
<path d="M687.5 306.5L1091.5 864.5M1090.6 306.5L686.6 864.5" stroke-width="1.3"/>
</g>
<g fill="#fff" stroke="#4f80ff" stroke-width="1">
<rect x="684.5" y="303.5" width="5" height="5"/><rect x="886.5" y="303.5" width="5" height="5"/><rect x="1088.5" y="303.5" width="5" height="5"/>
<rect x="684.5" y="582.5" width="5" height="5"/><rect x="1088.5" y="582.5" width="5" height="5"/>
<rect x="684.5" y="861.5" width="5" height="5"/><rect x="886.5" y="861.5" width="5" height="5"/><rect x="1088.5" y="861.5" width="5" height="5"/>
</g>
</svg>
<!-- dock -->
<div class="a" style="left:1823px;top:94px;width:16px;height:926px;background:#4a4a4a"></div>
<div class="a" style="left:1839px;top:64px;width:3px;height:956px;background:#4d4d4d;border-left:1px solid #3c3c3c;border-right:1px solid #3c3c3c"></div>
<div class="a" style="left:1842px;top:64px;width:76px;height:13px;background:#424242;border-top:1px solid #383838"></div>
<div class="a" style="left:1842px;top:77px;width:37px;height:943px;background:#535353"></div>
<div class="a" style="left:1879px;top:77px;width:3px;height:943px;background:#4d4d4d;border-left:1px solid #3c3c3c;border-right:1px solid #3c3c3c"></div>
<div class="a" style="left:1882px;top:77px;width:36px;height:943px;background:#535353"></div>
<div class="a" style="left:1842px;top:145px;width:37px;height:1px;background:#3c3c3c"></div>
<div class="a" style="left:1842px;top:242px;width:37px;height:1px;background:#3c3c3c"></div>
<div class="a" style="left:1842px;top:339px;width:37px;height:1px;background:#3c3c3c"></div>
<div class="a" style="left:1842px;top:408px;width:37px;height:1px;background:#3c3c3c"></div>
<div class="a" style="left:1842px;top:505px;width:37px;height:1px;background:#3c3c3c"></div>
<div class="a" style="left:1842px;top:602px;width:37px;height:1px;background:#3c3c3c"></div>
<div class="a" style="left:1882px;top:117px;width:36px;height:1px;background:#3c3c3c"></div>
<div class="a" style="left:1851px;top:80px;width:19px;height:4px;background-image:linear-gradient(90deg,#3c3c3c 50%,transparent 50%);background-size:2px 4px"></div>
<div class="a" style="left:1851px;top:149px;width:19px;height:4px;background-image:linear-gradient(90deg,#3c3c3c 50%,transparent 50%);background-size:2px 4px"></div>
<div class="a" style="left:1851px;top:246px;width:19px;height:4px;background-image:linear-gradient(90deg,#3c3c3c 50%,transparent 50%);background-size:2px 4px"></div>
<div class="a" style="left:1851px;top:343px;width:19px;height:4px;background-image:linear-gradient(90deg,#3c3c3c 50%,transparent 50%);background-size:2px 4px"></div>
<div class="a" style="left:1851px;top:412px;width:19px;height:4px;background-image:linear-gradient(90deg,#3c3c3c 50%,transparent 50%);background-size:2px 4px"></div>
<div class="a" style="left:1851px;top:509px;width:19px;height:4px;background-image:linear-gradient(90deg,#3c3c3c 50%,transparent 50%);background-size:2px 4px"></div>
<div class="a" style="left:1891px;top:80px;width:19px;height:4px;background-image:linear-gradient(90deg,#3c3c3c 50%,transparent 50%);background-size:2px 4px"></div>
<div class="a" style="left:1847px;top:351px;width:28px;height:23px;background:#333;border:1px solid #484848;border-radius:3px"></div>
<svg style="left:0;top:0" width="1918" height="1020" viewBox="0 0 1918 1020"><path d="M1868.8 68.400l-2.400 2.300 2.400 2.300M1872.8 68.400l-2.400 2.300 2.400 2.300" fill="none" stroke="#c6c6c6" stroke-width="1.500"/><path d="M1908.8 68.400l-2.400 2.300 2.400 2.300M1912.8 68.400l-2.400 2.300 2.400 2.300" fill="none" stroke="#c6c6c6" stroke-width="1.500"/><path d="M1827.800 104.500l3.700-3.600 3.700 3.600" fill="none" stroke="#9c9c9c" stroke-width="1.300"/><path d="M1827.900 1012.700l3.700 3.600 3.700-3.600" fill="none" stroke="#9c9c9c" stroke-width="1.300"/><path d="M1862 93c5 0 9.200 3 9.200 7.500 0 4-4.200 6.600-9.700 6.600-5.500 0-9.700-2-9.700-5 0-2.500 2.500-3.500 5-3.200 2 .2 3-.6 2.600-2.200-.5-2 .6-3.700 2.600-3.700Z" fill="#c6c6c6"/><circle cx="1856.500" cy="102.500" r="1.300" fill="#6a6a6a"/><circle cx="1861" cy="103.800" r="1.200" fill="#6a6a6a"/><circle cx="1865.200" cy="103.200" r="1.100" fill="#6a6a6a"/><circle cx="1868" cy="100.700" r="1" fill="#6a6a6a"/><circle cx="1867" cy="97.500" r=".9" fill="#6a6a6a"/><defs><linearGradient id="g3" x1="0" y1="1" x2="1" y2="0"><stop offset="0" stop-color="#666"/><stop offset="1" stop-color="#c8c8c8"/></linearGradient></defs><path d="M1854.500 120.500v15h15.300c0-8.300-6.800-15-15.300-15Z" fill="url(#g3)" stroke="#c6c6c6" stroke-width="1.200"/><rect x="1853" y="164" width="16" height="11" fill="#c6c6c6"/><rect x="1854" y="165.2" width="4" height="3.800" fill="#7a7a7a"/><rect x="1859" y="165.2" width="4" height="3.800" fill="#d0d0d0"/><rect x="1864" y="165.2" width="4" height="3.800" fill="#727272"/><rect x="1854" y="170.2" width="4" height="3.800" fill="#787878"/><rect x="1859" y="170.2" width="4" height="3.800" fill="#8a8a8a"/><rect x="1864" y="170.2" width="4" height="3.800" fill="#a8a8a8"/><path d="M1857.500 200h8v7h-8Z" fill="#c6c6c6"/><path d="M1859.500 199l-.8-7c-.3-2 .3-4 1.500-5.500 1 1.500 1.500 3.500 1.300 5.500l-.5 7ZM1856.800 199c-1-2-2.200-3-2-5.500 .1-1.800 1-3 2-3.800 .8 1.500 1.600 2.800 1.500 4.500l-.3 4.800ZM1863 199l1.200-5c-1.200-.5-2-1.500-1.500-2.500 1.500-1.500 5-1.500 7 .5-1 .5-2.500 .8-3 2l-1.500 5Z" fill="#c6c6c6"/><circle cx="1861.200" cy="221.300" r="4.300" fill="#c6c6c6"/><circle cx="1857.200" cy="226.800" r="4.200" fill="#c6c6c6"/><circle cx="1865.400" cy="226.800" r="4.200" fill="#c6c6c6"/><path d="M1860.300 226h2l.5 5 3.500 2.200v.8h-10v-.8l3.500-2.200Z" fill="#c6c6c6"/><rect x="1853" y="260" width="17" height="1" fill="#c6c6c6"/><rect x="1853" y="263.800" width="17" height="2" fill="#c6c6c6"/><rect x="1853" y="269" width="17" height="3.200" fill="#c6c6c6"/><defs><linearGradient id="g4" x1="0" x2="1"><stop offset="0" stop-color="#cfcfcf"/><stop offset="1" stop-color="#505050"/></linearGradient></defs><rect x="1853.500" y="288.500" width="16" height="11" fill="url(#g4)" stroke="#c6c6c6" stroke-width="1.200"/><circle cx="1858.500" cy="319.800" r="6" fill="#c6c6c6"/><circle cx="1863.500" cy="325.500" r="5.600" fill="#8e8e8e" stroke="#c6c6c6" stroke-width="1.300"/><circle cx="1861.200" cy="363" r="5.600" fill="#c6c6c6"/><circle cx="1861.200" cy="363" r="8" fill="none" stroke="#c6c6c6" stroke-width="1.100" stroke-dasharray="2.500 1.700"/><rect x="1856.500" y="384.500" width="13" height="13" fill="none" stroke="#c6c6c6" stroke-width="1.200"/><rect x="1853.500" y="391.500" width="4.500" height="4.500" fill="#535353" stroke="#c6c6c6" stroke-width="1.100"/><rect x="1855.800" y="394.200" width="5.400" height="5.400" fill="#c6c6c6"/><path d="M1861 426.500h-6.800v13.500h14v-6.500" fill="none" stroke="#c6c6c6" stroke-width="1.800"/><path d="M1863.500 424.400h6.600v6.600" fill="none" stroke="#c6c6c6" stroke-width="1.900"/><path d="M1864.500 430l5-5" fill="none" stroke="#c6c6c6" stroke-width="1.900"/><path d="M1861.500 451.800l8.500 5-8.500 5-8.500-5Z" fill="#c6c6c6"/><path d="M1853 462.200l2.800-1.600 5.700 3.300 5.700-3.300 2.800 1.600-8.500 5Z" fill="#c6c6c6"/><rect x="1852.500" y="479.500" width="10" height="13" fill="none" stroke="#c6c6c6" stroke-width="1.100"/><rect x="1856.500" y="486.500" width="13" height="10" fill="#535353" stroke="#c6c6c6" stroke-width="1.100"/><rect x="1855.500" y="523.500" width="12" height="12" fill="none" stroke="#b0b0b0" stroke-width="1"/><rect x="1854" y="522" width="3" height="3" fill="#c6c6c6"/><rect x="1860" y="522" width="3" height="3" fill="#c6c6c6"/><rect x="1866" y="522" width="3" height="3" fill="#c6c6c6"/><rect x="1854" y="528" width="3" height="3" fill="#c6c6c6"/><rect x="1866" y="528" width="3" height="3" fill="#c6c6c6"/><rect x="1854" y="534" width="3" height="3" fill="#c6c6c6"/><rect x="1860" y="534" width="3" height="3" fill="#c6c6c6"/><rect x="1866" y="534" width="3" height="3" fill="#c6c6c6"/><rect x="1860.700" y="528.700" width="1.600" height="1.600" fill="#c6c6c6"/><rect x="1854" y="548.500" width="1" height="18" fill="#c6c6c6"/><rect x="1856" y="550.500" width="8" height="5.500" fill="#c6c6c6"/><rect x="1856" y="558.500" width="13" height="5.500" fill="#c6c6c6"/><rect x="1854" y="578" width="9.500" height="9.500" fill="#c6c6c6"/><rect x="1859.500" y="583.500" width="9.500" height="9.500" fill="#c6c6c6"/><rect x="1859.500" y="583.500" width="4" height="4" fill="#6a6a6a" stroke="#c6c6c6" stroke-width="1.200"/><path d="M1897.300 96.300c1.500-2.500 4.200-3.900 7-3.900 4.400 0 7.800 3.500 7.800 7.800s-3.400 7.800-7.800 7.800h-6.800c-3.700 0-6.600-2.900-6.600-6.200 0-3 2.600-5.500 6.400-5.500Z" fill="#c6c6c6"/><path d="M1903 99.300l-2.600-2.500c-1.200-1-2.800-1.200-4.200-.7-2.300 .9-3.500 3.200-2.900 5.500 .5 2 2.300 3.400 4.500 3.400h6.500c2.900 0 5.200-2.100 5.200-4.800s-2.200-4.900-5-4.900c-1.500 0-2.800 .6-3.800 1.600" fill="none" stroke="#6c6c6c" stroke-width="1"/><path d="M1899 101.700l3.700 3.300" fill="none" stroke="#6c6c6c" stroke-width="1"/></svg>
<!-- appear -->
<div class="a" style="left:1599px;top:337px;width:242px;height:399px;background:#535353;border:1px solid #383838;border-right:0;box-shadow:-1px 1px 2px rgba(0,0,0,.2)"></div>
<div class="a" style="left:1600px;top:338px;width:241px;height:30px;background:#424242;border-top:3px solid #333"></div>
<div class="a" style="left:1600px;top:341px;width:72px;height:27px;background:#535353;background-image:linear-gradient(#4d4d4d,#535353 40%)"></div>
<div class="a" style="left:1672px;top:341px;width:85px;height:26px;background:#464646;border-left:1px solid #3a3a3a;border-right:1px solid #3a3a3a"></div>
<div class="a" style="left:1672px;top:367px;width:169px;height:1px;background:#393939"></div>
<div class="t" style="left:1609px;top:347px;color:#f4f4f4;font-size:9.6px;line-height:13px;height:13px;font-weight:700;transform:translate(0.1px,0.9px) scaleX(0.991) skewX(.03deg);transform-origin:0 0;">Appearance</div>
<div class="t" style="left:1681px;top:347px;color:#b4b4b4;font-size:9.6px;line-height:13px;height:13px;font-weight:700;transform:translate(0px,0.9px) scaleX(0.988) skewX(.03deg);transform-origin:0 0;">Graphic Styles</div>
<div class="sep" style="left:1816px;top:349px;height:11px;background:#8a8a8a"></div>
<div class="a" style="left:1605px;top:374px;width:230px;height:333px;border:1px solid #5f5f5f;border-radius:3px"></div>
<div class="a" style="left:1606px;top:399px;width:228px;height:1px;background:#5c5c5c"></div>
<div class="a" style="left:1606px;top:424px;width:228px;height:1px;background:#5c5c5c"></div>
<div class="a" style="left:1606px;top:449px;width:228px;height:1px;background:#5c5c5c"></div>
<div class="a" style="left:1608px;top:377px;width:20px;height:20px;background:#fff;border:1px solid #2a2a2a"></div>
<div class="a" style="left:1630px;top:425px;width:1px;height:24px;background:#383838"></div>
<div class="t" style="left:1656px;top:380px;color:#f4f4f4;font-size:9.6px;line-height:13px;height:13px;font-weight:700;transform:translate(0px,0.9px) scaleX(1.141) skewX(.03deg);transform-origin:0 0;">Image Tracing</div>
<div class="t" style="left:1656px;top:405px;color:#f0f0f0;font-size:9.6px;line-height:13px;height:13px;transform:translate(0px,0.9px) scaleX(1.029) skewX(.03deg);transform-origin:0 0;-webkit-text-stroke:0.3px #f0f0f0;">Contents</div>
<div class="t" style="left:1656px;top:430px;color:#f0f0f0;font-size:9.6px;line-height:13px;height:13px;transform:translate(0px,0.9px) scaleX(1.043) skewX(.03deg);transform-origin:0 0;-webkit-text-stroke:0.3px #f0f0f0;">Opacity:</div>
<div class="u" style="left:1656px;top:443px;width:37px"></div>
<div class="t" style="left:1698px;top:430px;color:#f0f0f0;font-size:9.6px;line-height:13px;height:13px;transform:translate(0.1px,0.9px) scaleX(1.029) skewX(.03deg);transform-origin:0 0;-webkit-text-stroke:0.3px #f0f0f0;">Default</div>
<div class="a" style="left:1600px;top:727px;width:241px;height:1px;background:#383838"></div>
<div class="a" style="left:1600px;top:728px;width:241px;height:7px;background:#4d4d4d"></div>
<div class="a" style="left:1710px;top:729px;width:19px;height:4px;background-image:linear-gradient(90deg,#3a3a3a 50%,transparent 50%);background-size:2px 4px"></div>
<svg style="left:0;top:0" width="1918" height="1020" viewBox="0 0 1918 1020"><path d="M1800 352.500l2.800 2.500-2.800 2.500M1804.600 352.500l2.800 2.500-2.800 2.500" fill="none" stroke="#e6e6e6" stroke-width="1.400"/><path d="M1824 351.500h10M1824 353.500h10M1824 355.500h10M1824 357.500h10" fill="none" stroke="#c6c6c6" stroke-width="1"/><path d="M1611 437.200c3-5 10-5 13 0-3 5-10 5-13 0Z" fill="#787878"/><circle cx="1617.500" cy="437" r="2.300" fill="#535353"/><circle cx="1617.500" cy="437" r="1" fill="#787878"/><rect x="1613" y="713.200" width="9" height="9" fill="none" stroke="#c6c6c6" stroke-width="2"/><rect x="1638.300" y="712.700" width="10.400" height="10" fill="none" stroke="#c6c6c6" stroke-width="1"/><rect x="1640.300" y="714.700" width="6.400" height="6" fill="#c6c6c6"/><path d="M1676.200 720.500h3l-1.500 1.700Z" fill="#c6c6c6"/><circle cx="1754.500" cy="717.500" r="4.900" fill="none" stroke="#7e7e7e" stroke-width="1.600"/><path d="M1751 714l7 7" stroke="#7e7e7e" stroke-width="1.600"/><path d="M1776.300 712.300h9.700v9.700h-6.500v-3.300h-3.200Z" fill="#7c7c7c"/><path d="M1776.500 719.500h2.500v2.500Z" fill="#7c7c7c"/><path d="M1801.500 714h10M1804.500 713.500v-1.500h4v1.500M1802.500 715l.7 7.500h6.600l.7-7.500M1805 716v5.500M1806.500 716v5.500M1808 716v5.500" fill="none" stroke="#7e7e7e" stroke-width="1.100"/></svg>
<div class="t" style="left:1664px;top:706px;color:#c6c6c6;font-size:14px;line-height:20px;height:20px;font-style:italic;transform:translate(0px,0.6px) scaleX(0.955) skewX(.03deg);transform-origin:0 0;">fx</div>
<!-- trace -->
<div class="a" style="left:1309px;top:404px;width:256px;height:551px;background:#535353;border:1px solid #444;border-top:0;border-radius:4px 4px 0 0;box-shadow:0 2px 4px rgba(0,0,0,.22)"></div>
<div class="a" style="left:1309px;top:404px;width:256px;height:41px;background:#424242;border-radius:4px 4px 0 0"></div>
<div class="a" style="left:1309px;top:417px;width:256px;height:1px;background:#3a3a3a"></div>
<div class="a" style="left:1309px;top:418px;width:76px;height:27px;background:#535353;background-image:linear-gradient(#4d4d4d,#535353 40%);border-right:1px solid #3a3a3a"></div>
<div class="a" style="left:1385px;top:444px;width:180px;height:1px;background:#3a3a3a"></div>
<div class="t" style="left:1319px;top:425px;color:#f4f4f4;font-size:9.6px;line-height:13px;height:13px;font-weight:700;transform:translate(0.4px,0.3px) scaleX(1.024) skewX(.03deg);transform-origin:0 0;">Image Trace</div>
<div class="a" style="left:1315px;top:482px;width:244px;height:2px;background:#4a4a4a"></div>
<div class="a" style="left:1315px;top:880px;width:244px;height:2px;background:#4a4a4a"></div>
<div class="a" style="left:1315px;top:923px;width:244px;height:2px;background:#4a4a4a"></div>
<div class="a" style="left:1380px;top:643px;width:179px;height:2px;background:#4a4a4a"></div>
<div class="fld" style="left:1366px;top:490px;width:164px;height:21px"></div>
<div class="fld" style="left:1366px;top:519px;width:164px;height:21px"></div>
<div class="fld" style="left:1366px;top:547px;width:164px;height:21px"></div>
<div class="a" style="left:1366px;top:573px;width:164px;height:21px;background:#595959;border-radius:3px"></div>
<div class="t" style="left:1331px;top:495px;color:#d8d8d8;font-size:9.6px;line-height:13px;height:13px;transform:translate(0.1px,0.3px) scaleX(1.02) skewX(.03deg);transform-origin:0 0;-webkit-text-stroke:0.3px #d8d8d8;">Preset:</div>
<div class="t" style="left:1373px;top:495px;color:#ffffff;font-size:9.6px;line-height:13px;height:13px;transform:translate(0.1px,0px) scaleX(0.994) skewX(.03deg);transform-origin:0 0;-webkit-text-stroke:0.3px #ffffff;">Custom</div>
<div class="t" style="left:1337px;top:524px;color:#d8d8d8;font-size:9.6px;line-height:13px;height:13px;transform:translate(0.7px,0.3px) scaleX(1.043) skewX(.03deg);transform-origin:0 0;-webkit-text-stroke:0.3px #d8d8d8;">View:</div>
<div class="t" style="left:1373px;top:524px;color:#ffffff;font-size:9.6px;line-height:13px;height:13px;transform:translate(0.1px,0px) scaleX(0.998) skewX(.03deg);transform-origin:0 0;-webkit-text-stroke:0.3px #ffffff;">Tracing Result</div>
<div class="t" style="left:1334px;top:552px;color:#d8d8d8;font-size:9.6px;line-height:13px;height:13px;transform:translate(0.8px,0.3px) scaleX(1.035) skewX(.03deg);transform-origin:0 0;-webkit-text-stroke:0.3px #d8d8d8;">Mode:</div>
<div class="t" style="left:1373px;top:552px;color:#ffffff;font-size:9.6px;line-height:13px;height:13px;transform:translate(0.1px,0px) scaleX(1.036) skewX(.03deg);transform-origin:0 0;-webkit-text-stroke:0.3px #ffffff;">Black and White</div>
<div class="t" style="left:1328px;top:578px;color:#7c7c7c;font-size:9.6px;line-height:13px;height:13px;transform:translate(0.9px,0.3px) scaleX(1.025) skewX(.03deg);transform-origin:0 0;-webkit-text-stroke:0.3px #7c7c7c;">Palette:</div>
<div class="t" style="left:1373px;top:578px;color:#7c7c7c;font-size:9.6px;line-height:13px;height:13px;transform:translate(0.1px,0px) scaleX(1.032) skewX(.03deg);transform-origin:0 0;-webkit-text-stroke:0.3px #7c7c7c;">Limited</div>
<div class="a" style="left:1367px;top:608px;width:133px;height:2px;background:#7c7c7c"></div><svg style="left:1499px;top:600px" width="18" height="18" viewBox="-9 -9 18 18"><circle r="7.500" fill="#535353"/><circle r="5.100" fill="#535353" stroke="#d6d6d6" stroke-width="2.200"/></svg><div class="fld" style="left:1521px;top:599px;width:38px;height:20px;background:#424242;border-color:#5e5e5e"></div>
<div class="t" style="left:1315px;top:603px;color:#d8d8d8;font-size:9.6px;line-height:13px;height:13px;transform:translate(0.4px,0.9px) scaleX(1.029) skewX(.03deg);transform-origin:0 0;-webkit-text-stroke:0.3px #d8d8d8;">Threshold:</div>
<div class="t" style="left:1526px;top:602px;color:#ffffff;font-size:9.6px;line-height:13px;height:13px;transform:translate(0.5px,0.3px) scaleX(0.888) skewX(.03deg);transform-origin:0 0;-webkit-text-stroke:0.3px #ffffff;">251</div>
<div class="t" style="left:1365px;top:618px;color:#d8d8d8;font-size:9.6px;line-height:13px;height:13px;transform:translate(0.9px,0px) scaleX(0.97) skewX(.03deg);transform-origin:0 0;-webkit-text-stroke:0.3px #d8d8d8;">Less</div>
<div class="t" style="left:1493px;top:618px;color:#d8d8d8;font-size:9.6px;line-height:13px;height:13px;transform:translate(0.8px,0px) scaleX(1.018) skewX(.03deg);transform-origin:0 0;-webkit-text-stroke:0.3px #d8d8d8;">More</div>
<div class="t" style="left:1336px;top:639px;color:#d8d8d8;font-size:9.6px;line-height:13px;height:13px;transform:translate(0px,0px) scaleX(0.993) skewX(.03deg);transform-origin:0 0;-webkit-text-stroke:0.3px #d8d8d8;">Advanced</div>
<div class="a" style="left:1367px;top:668px;width:148px;height:2px;background:#7c7c7c"></div><svg style="left:1501px;top:660px" width="18" height="18" viewBox="-9 -9 18 18"><circle r="7.500" fill="#535353"/><circle r="5.100" fill="#535353" stroke="#d6d6d6" stroke-width="2.200"/></svg><div class="fld" style="left:1521px;top:660px;width:38px;height:20px;background:#424242;border-color:#5e5e5e"></div>
<div class="t" style="left:1334px;top:664px;color:#d8d8d8;font-size:9.6px;line-height:13px;height:13px;transform:translate(0.8px,0.3px) scaleX(0.996) skewX(.03deg);transform-origin:0 0;-webkit-text-stroke:0.3px #d8d8d8;">Paths:</div>
<div class="t" style="left:1526px;top:663px;color:#ffffff;font-size:9.6px;line-height:13px;height:13px;transform:translate(0.5px,0.3px) scaleX(0.94) skewX(.03deg);transform-origin:0 0;-webkit-text-stroke:0.3px #ffffff;">100%</div>
<div class="t" style="left:1365px;top:679px;color:#d8d8d8;font-size:9.6px;line-height:13px;height:13px;transform:translate(0.9px,0px) scaleX(0.994) skewX(.03deg);transform-origin:0 0;-webkit-text-stroke:0.3px #d8d8d8;">Low</div>
<div class="t" style="left:1494px;top:679px;color:#d8d8d8;font-size:9.6px;line-height:13px;height:13px;transform:translate(0.9px,0px) scaleX(1.01) skewX(.03deg);transform-origin:0 0;-webkit-text-stroke:0.3px #d8d8d8;">High</div>
<div class="a" style="left:1367px;top:704px;width:148px;height:2px;background:#7c7c7c"></div><svg style="left:1501px;top:696px" width="18" height="18" viewBox="-9 -9 18 18"><circle r="7.500" fill="#535353"/><circle r="5.100" fill="#535353" stroke="#d6d6d6" stroke-width="2.200"/></svg><div class="fld" style="left:1521px;top:695px;width:38px;height:20px;background:#424242;border-color:#5e5e5e"></div>
<div class="t" style="left:1324px;top:699px;color:#d8d8d8;font-size:9.6px;line-height:13px;height:13px;transform:translate(0.9px,0.3px) scaleX(0.995) skewX(.03deg);transform-origin:0 0;-webkit-text-stroke:0.3px #d8d8d8;">Corners:</div>
<div class="t" style="left:1526px;top:698px;color:#ffffff;font-size:9.6px;line-height:13px;height:13px;transform:translate(0.5px,0.3px) scaleX(0.94) skewX(.03deg);transform-origin:0 0;-webkit-text-stroke:0.3px #ffffff;">100%</div>
<div class="t" style="left:1365px;top:714px;color:#d8d8d8;font-size:9.6px;line-height:13px;height:13px;transform:translate(0.9px,0px) scaleX(0.97) skewX(.03deg);transform-origin:0 0;-webkit-text-stroke:0.3px #d8d8d8;">Less</div>
<div class="t" style="left:1493px;top:714px;color:#d8d8d8;font-size:9.6px;line-height:13px;height:13px;transform:translate(0.8px,0px) scaleX(1.018) skewX(.03deg);transform-origin:0 0;-webkit-text-stroke:0.3px #d8d8d8;">More</div>
<div class="a" style="left:1367px;top:739px;width:148px;height:2px;background:#7c7c7c"></div><svg style="left:1413px;top:731px" width="18" height="18" viewBox="-9 -9 18 18"><circle r="7.500" fill="#535353"/><circle r="5.100" fill="#535353" stroke="#d6d6d6" stroke-width="2.200"/></svg><div class="fld" style="left:1521px;top:730px;width:38px;height:20px;background:#424242;border-color:#5e5e5e"></div>
<div class="t" style="left:1334px;top:734px;color:#d8d8d8;font-size:9.6px;line-height:13px;height:13px;transform:translate(0.5px,0.3px) scaleX(1.007) skewX(.03deg);transform-origin:0 0;-webkit-text-stroke:0.3px #d8d8d8;">Noise:</div>
<div class="t" style="left:1526px;top:733px;color:#ffffff;font-size:9.6px;line-height:13px;height:13px;transform:translate(0.5px,0.3px) scaleX(0.979) skewX(.03deg);transform-origin:0 0;-webkit-text-stroke:0.3px #ffffff;">37 px</div>
<div class="t" style="left:1366px;top:749px;color:#d8d8d8;font-size:9.6px;line-height:13px;height:13px;transform:translate(0.9px,0px) scaleX(0.88) skewX(.03deg);transform-origin:0 0;-webkit-text-stroke:0.3px #d8d8d8;">1</div>
<div class="t" style="left:1499px;top:749px;color:#d8d8d8;font-size:9.6px;line-height:13px;height:13px;transform:translate(0.6px,0px) scaleX(0.988) skewX(.03deg);transform-origin:0 0;-webkit-text-stroke:0.3px #d8d8d8;">100</div>
<div class="t" style="left:1325px;top:769px;color:#d8d8d8;font-size:9.6px;line-height:13px;height:13px;transform:translate(0.7px,0.3px) scaleX(1.059) skewX(.03deg);transform-origin:0 0;-webkit-text-stroke:0.3px #d8d8d8;">Method:</div>
<div class="a" style="left:1366px;top:765px;width:49px;height:24px;border:1px solid #626262;border-radius:3px;background:#535353"></div>
<div class="a" style="left:1367px;top:766px;width:23px;height:22px;background:#2e2e2e;border-radius:2px 0 0 2px"></div>
<div class="a" style="left:1390px;top:766px;width:1px;height:22px;background:#626262"></div>
<div class="t" style="left:1329px;top:795px;color:#d8d8d8;font-size:9.6px;line-height:13px;height:13px;transform:translate(0.6px,0.3px) scaleX(1.035) skewX(.03deg);transform-origin:0 0;-webkit-text-stroke:0.3px #d8d8d8;">Create:</div>
<div class="a" style="left:1367px;top:795px;width:12px;height:12px;background:#c8c8c8;border-radius:2px"></div><svg style="left:1367px;top:795px" width="12" height="12" viewBox="0 0 12 12"><path d="M2.600 6.200l2.300 2.500 4.400-5.400" fill="none" stroke="#3c3c3c" stroke-width="1.700"/></svg>
<div class="t" style="left:1383px;top:795px;color:#ffffff;font-size:9.6px;line-height:13px;height:13px;transform:translate(0.8px,0px) scaleX(0.994) skewX(.03deg);transform-origin:0 0;-webkit-text-stroke:0.3px #ffffff;">Fills</div>
<div class="a" style="left:1407px;top:795px;width:12px;height:12px;border:1px solid #c0c0c0;border-radius:2px;background:#4e4e4e"></div>
<div class="t" style="left:1424px;top:795px;color:#ffffff;font-size:9.6px;line-height:13px;height:13px;transform:translate(0px,0px) scaleX(0.997) skewX(.03deg);transform-origin:0 0;-webkit-text-stroke:0.3px #ffffff;">Strokes</div>
<div class="t" style="left:1330px;top:818px;color:#7c7c7c;font-size:9.6px;line-height:13px;height:13px;transform:translate(0.8px,0.3px) scaleX(1.03) skewX(.03deg);transform-origin:0 0;-webkit-text-stroke:0.3px #7c7c7c;">Stroke:</div>
<div class="a" style="left:1366px;top:814px;width:70px;height:21px;background:#595959;border-radius:3px"></div>
<div class="a" style="left:1384px;top:814px;width:1px;height:21px;background:#535353"></div>
<div class="t" style="left:1388px;top:818px;color:#777;font-size:9.6px;line-height:13px;height:13px;transform:translate(0.2px,0px) scaleX(0.992) skewX(.03deg);transform-origin:0 0;-webkit-text-stroke:0.3px #777;">10 px</div>
<div class="t" style="left:1324px;top:841px;color:#d8d8d8;font-size:9.6px;line-height:13px;height:13px;transform:translate(0.9px,0.3px) scaleX(1.051) skewX(.03deg);transform-origin:0 0;-webkit-text-stroke:0.3px #d8d8d8;">Options:</div>
<div class="a" style="left:1367px;top:841px;width:12px;height:12px;background:#c8c8c8;border-radius:2px"></div><svg style="left:1367px;top:841px" width="12" height="12" viewBox="0 0 12 12"><path d="M2.600 6.200l2.300 2.500 4.400-5.400" fill="none" stroke="#3c3c3c" stroke-width="1.700"/></svg>
<div class="t" style="left:1383px;top:841px;color:#ffffff;font-size:9.6px;line-height:13px;height:13px;transform:translate(0.8px,0px) scaleX(1.002) skewX(.03deg);transform-origin:0 0;-webkit-text-stroke:0.3px #ffffff;">Snap Curves To Lines</div>
<div class="a" style="left:1367px;top:861px;width:12px;height:12px;border:1px solid #c0c0c0;border-radius:2px;background:#4e4e4e"></div>
<div class="t" style="left:1383px;top:861px;color:#ffffff;font-size:9.6px;line-height:13px;height:13px;transform:translate(0.8px,0px) scaleX(1.076) skewX(.03deg);transform-origin:0 0;-webkit-text-stroke:0.3px #ffffff;">Ignore White</div>
<div class="t" style="left:1340px;top:888px;color:#d8d8d8;font-size:9.6px;line-height:13px;height:13px;transform:translate(0.9px,0px) scaleX(1.019) skewX(.03deg);transform-origin:0 0;-webkit-text-stroke:0.3px #d8d8d8;">Paths:</div>
<div class="t" style="left:1385px;top:888px;color:#d8d8d8;font-size:9.6px;line-height:13px;height:13px;transform:translate(0px,0px) scaleX(1.08) skewX(.03deg);transform-origin:0 0;-webkit-text-stroke:0.3px #d8d8d8;">7</div>
<div class="t" style="left:1461px;top:888px;color:#d8d8d8;font-size:9.6px;line-height:13px;height:13px;transform:translate(0.8px,0px) scaleX(1.02) skewX(.03deg);transform-origin:0 0;-webkit-text-stroke:0.3px #d8d8d8;">Colors:</div>
<div class="t" style="left:1497px;top:888px;color:#d8d8d8;font-size:9.6px;line-height:13px;height:13px;transform:translate(0.8px,0px) scaleX(1.18) skewX(.03deg);transform-origin:0 0;-webkit-text-stroke:0.3px #d8d8d8;">2</div>
<div class="t" style="left:1340px;top:906px;color:#d8d8d8;font-size:9.6px;line-height:13px;height:13px;transform:translate(0.9px,0px) scaleX(1.013) skewX(.03deg);transform-origin:0 0;-webkit-text-stroke:0.3px #d8d8d8;">Anchors:</div>
<div class="t" style="left:1385px;top:906px;color:#d8d8d8;font-size:9.6px;line-height:13px;height:13px;transform:translate(0.3px,0px) scaleX(1.012) skewX(.03deg);transform-origin:0 0;-webkit-text-stroke:0.3px #d8d8d8;">162</div>
<div class="a" style="left:1316px;top:933px;width:12px;height:12px;background:#c8c8c8;border-radius:2px"></div><svg style="left:1316px;top:933px" width="12" height="12" viewBox="0 0 12 12"><path d="M2.600 6.200l2.300 2.500 4.400-5.400" fill="none" stroke="#3c3c3c" stroke-width="1.700"/></svg>
<div class="t" style="left:1332px;top:933px;color:#ffffff;font-size:9.6px;line-height:13px;height:13px;transform:translate(0.6px,0px) scaleX(1) skewX(.03deg);transform-origin:0 0;-webkit-text-stroke:0.3px #ffffff;">Preview</div>
<div class="a" style="left:1495px;top:930px;width:64px;height:19px;background:#595959;border-radius:3px"></div>
<div class="t" style="left:1515px;top:934px;color:#787878;font-size:9.6px;line-height:13px;height:13px;transform:translate(0px,0px) scaleX(1) skewX(.03deg);transform-origin:0 0;-webkit-text-stroke:0.3px #787878;">Trace</div>
<svg style="left:0;top:0" width="1918" height="1020" viewBox="0 0 1918 1020"><path d="M1537 409.800l-2.700 2.200 2.700 2.200ZM1541 409.800l-2.700 2.200 2.700 2.200Z" fill="#c6c6c6" stroke="#c6c6c6" stroke-width=".5"/><path d="M1553.500 409.700l5.200 5.200M1558.700 409.700l-5.200 5.200" fill="none" stroke="#c6c6c6" stroke-width="1.800"/><path d="M1517.1 498.85L1520.6 502.15L1524.1 498.85" fill="none" stroke="#e0e0e0" stroke-width="1.3"/><path d="M1517.1 527.85L1520.6 531.15L1524.1 527.85" fill="none" stroke="#e0e0e0" stroke-width="1.3"/><path d="M1517.1 555.85L1520.6 559.15L1524.1 555.85" fill="none" stroke="#e0e0e0" stroke-width="1.3"/><path d="M1517.1 581.85L1520.6 585.15L1524.1 581.85" fill="none" stroke="#6e6e6e" stroke-width="1.3"/><circle cx="1365.300" cy="464" r="4.300" fill="#bdbdbd"/><path d="M1365 457.800a6.200 6.200 0 0 1 0 12.400" fill="none" stroke="#d4d4d4" stroke-width="1.300"/><path d="M1366 456.200l-2.800 1.600 2.800 1.600ZM1366 468.600l-2.800 1.600 2.800 1.600Z" fill="#d4d4d4"/><circle cx="1359.800" cy="468.200" r="3.400" fill="#535353"/><circle cx="1359.800" cy="468.200" r="2.300" fill="none" stroke="#c6c6c6" stroke-width="1.800" stroke-dasharray="1.200 .85"/><circle cx="1359.800" cy="468.200" r="1.700" fill="none" stroke="#c6c6c6" stroke-width=".9"/><path d="M1386 460.300h3.800l1.200-2.300h4.300l1.200 2.300h3.800v9h-14.300Z" fill="#c6c6c6"/><circle cx="1393" cy="464.200" r="2.700" fill="#c6c6c6" stroke="#535353" stroke-width="1"/><rect x="1415.500" y="457.500" width="13" height="13" fill="none" stroke="#c6c6c6" stroke-width="1"/><rect x="1420.500" y="458" width="5" height="4" fill="#8c8c8c"/><rect x="1416" y="462.500" width="4.500" height="4.500" fill="#999"/><path d="M1420.500 457.500v9.500h-5M1415.500 462.500h11v-5" fill="none" stroke="#c6c6c6" stroke-width="1"/><defs><linearGradient id="g5" x1="0" x2="1"><stop offset="0" stop-color="#cfcfcf"/><stop offset="1" stop-color="#585858"/></linearGradient></defs><rect x="1444.500" y="457.500" width="13" height="13" fill="url(#g5)" stroke="#c6c6c6" stroke-width="1"/><rect x="1473.500" y="457.500" width="13" height="13" fill="none" stroke="#c6c6c6" stroke-width="1"/><rect x="1473" y="457" width="7" height="14" fill="#c6c6c6"/><path d="M1502.500 457.500h9v4.300a4.400 4.400 0 1 1-4.700 4.400v.7h-4.300Z" fill="none" stroke="#c6c6c6" stroke-width="1.100"/><g fill="#c6c6c6"><rect x="1541" y="497" width="1.200" height="1"/><rect x="1544" y="497" width="9" height="1"/><rect x="1541" y="500.500" width="1.200" height="1"/><rect x="1544" y="500.500" width="9" height="1"/><rect x="1541" y="504" width="1.200" height="1"/><rect x="1544" y="504" width="9" height="1"/></g><path d="M1540 530c3-5.300 10.300-5.300 13.300 0-3 5.300-10.300 5.300-13.300 0Z" fill="#dcdcdc"/><circle cx="1546.600" cy="529.700" r="2.600" fill="#535353"/><circle cx="1546.600" cy="529.700" r="1.100" fill="#dcdcdc"/><path d="M1320 643h11.200l-5.600 5.800Z" fill="#c6c6c6"/><rect x="1371" y="770" width="12.500" height="14" fill="#c6c6c6"/><circle cx="1381" cy="777" r="4.500" fill="#4a4a4a" stroke="#c6c6c6" stroke-width="1.200"/><path d="M1376.300 773a5.200 5.200 0 0 0 0 8" fill="none" stroke="#2e2e2e" stroke-width="1.500"/><rect x="1396" y="770" width="12" height="14" fill="#c6c6c6"/><circle cx="1406.300" cy="777" r="5" fill="#c6c6c6"/><circle cx="1406.300" cy="777" r="3.800" fill="#727272"/><path d="M1372.1 821.1L1375.5 817.9L1378.9 821.1" fill="none" stroke="#6e6e6e" stroke-width="1.1"/><path d="M1372.1 827.9L1375.5 831.1L1378.9 827.9" fill="none" stroke="#6e6e6e" stroke-width="1.1"/><circle cx="1323" cy="902" r="6.500" fill="none" stroke="#c6c6c6" stroke-width="1.100"/><path d="M1321.500 900.500h2v4.500h-2.300M1323.500 905h1.800" fill="none" stroke="#c6c6c6" stroke-width="1.300"/><circle cx="1323" cy="898.300" r="1" fill="#c6c6c6"/></svg>
</body>
</html>
